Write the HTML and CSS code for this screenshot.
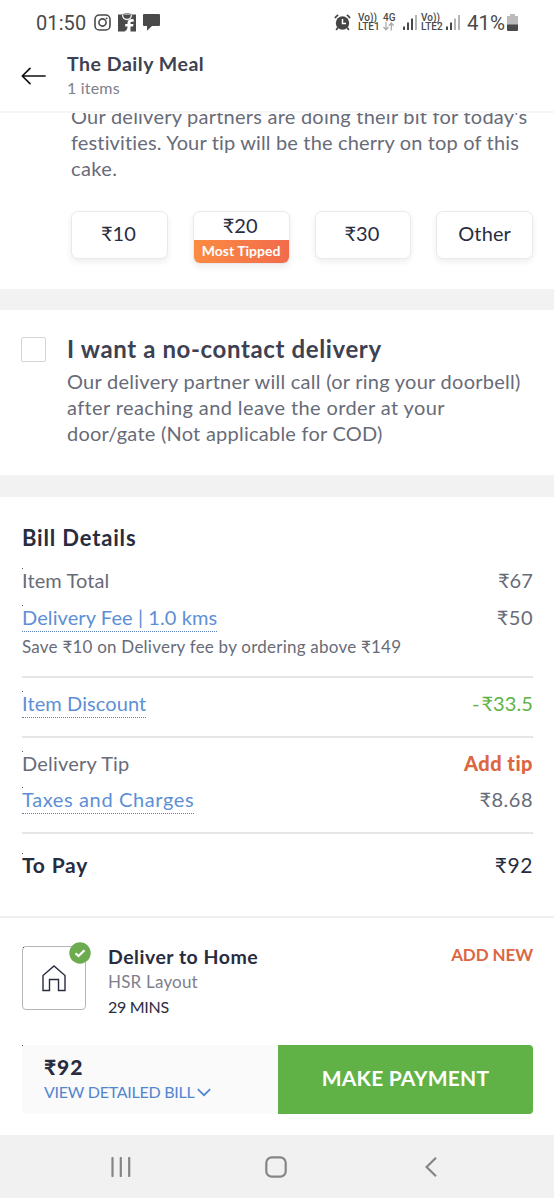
FILE: index.html
```html
<!DOCTYPE html>
<html lang="en">
<head>
<meta charset="utf-8">
<title>The Daily Meal</title>
<link rel="stylesheet" href="styles.css">
</head>
<body>
<div class="status">
  <span class="clock">01:50</span>
  <svg class="ic-insta" width="17" height="17" viewBox="0 0 17 17" fill="none" stroke="#4a4a4a" stroke-width="1.6"><rect x="1" y="1" width="15" height="15" rx="4.3"/><circle cx="8.5" cy="8.5" r="3.6"/><circle cx="12.6" cy="4.4" r=".6" fill="#4a4a4a" stroke-width=".8"/></svg>
  <svg class="ic-bag" width="18" height="19" viewBox="0 0 18 19"><path fill="#4a4a4a" d="M0 1.500h18V18.500H12.500V13.500h2.500l.5-2.500h-3V10q0-1.300 1.300-1.300h1.900V6.200q-5.700-.7-6.200 3.300V11H7.200v2.500h2.300v1q-.3 3-3 4H0z"/><path d="M4.500 1.800q.3 4.700 4.500 4.700t4.500-4.700" fill="none" stroke="#eee" stroke-width="1.300"/><path d="M4.500 1.500q4.500-2.500 9 0" fill="none" stroke="#888" stroke-width="1"/></svg>
  <svg class="ic-chat" width="17" height="17" viewBox="0 0 17 17"><path fill="#4a4a4a" d="M1 0h15q1 0 1 1v10q0 1-1 1H9l-5 4.800V12H1q-1 0-1-1V1q0-1 1-1z"/></svg>
  <span class="grow"></span>
  <svg class="ic-alarm" width="17" height="17" viewBox="0 0 17 17"><circle cx="8.500" cy="9" r="6.700" fill="#454545"/><path d="M8.500 5v4.500h3.500" fill="none" stroke="#fff" stroke-width="1.500"/><path d="M1 4.200Q2 2 4.200 1M16 4.200Q15 2 12.800 1M3.800 13.500l-1.600 2.500M13.200 13.500l1.600 2.500" fill="none" stroke="#454545" stroke-width="1.700"/></svg>
  <span class="net lte1">Vo))<br>LTE1</span>
  <span class="net g4">4G<svg width="11" height="9" viewBox="0 0 11 9" fill="none" stroke="#aaa" stroke-width="1.300"><path d="M3 0v7.500M.5 5l2.500 2.700L5.500 5M8.300 8.500V1M5.800 3.700L8.300 1l2.500 2.700"/></svg></span>
  <svg class="sig" width="14" height="15" viewBox="0 0 14 15"><path fill="#4a4a4a" d="M0 11.500h2V15H0zM4 7.500h2V15H4zM8 3.500h2V15H8z"/><path fill="#b5b5b5" d="M12 0h2v15h-2z"/></svg>
  <span class="net lte2">Vo))<br>LTE2</span>
  <svg class="sig" width="14" height="15" viewBox="0 0 14 15"><path fill="#4a4a4a" d="M0 11.500h2V15H0zM4 7.500h2V15H4z"/><path fill="#b5b5b5" d="M8 3.500h2V15H8zM12 0h2v15h-2z"/></svg>
  <span class="pct">41%</span>
  <svg class="ic-bat" width="11" height="17" viewBox="0 0 11 17"><path fill="#bbb" d="M3 0h5v2h3v9H0V2h3z"/><path fill="#4a4a4a" d="M0 10.500h11V16q0 1-1 1H1q-1 0-1-1z"/></svg>
</div>
<header class="header">
  <svg class="back" width="26" height="18" viewBox="0 0 26 18" fill="none" stroke="#111" stroke-width="1.700" stroke-linecap="round" stroke-linejoin="round"><path d="M24 9H1.500M9 1.300L1.300 9L9 16.700"/></svg>
  <div>
    <div class="h-title"><span>The Daily Meal</span></div>
    <div class="h-sub"><span>1 items</span></div>
  </div>
</header>
<section class="tips">
  <p class="copy tip-copy"><span class="l1">Our delivery partners are doing their bit for today's</span><br><span class="l2">festivities. Your tip will be the cherry on top of this</span><br><span class="l3">cake.</span></p>
  <div class="tip-row">
    <div class="tip">₹10</div>
    <div class="tip popular"><div class="amt">₹20</div><div class="tag">Most Tipped</div></div>
    <div class="tip">₹30</div>
    <div class="tip other">Other</div>
  </div>
</section>
<section class="contact">
  <div class="box"></div>
  <div>
    <h2 class="c-title"><span>I want a no-contact delivery</span></h2>
    <p class="copy c-copy"><span class="l1">Our delivery partner will call (or ring your doorbell)</span><br><span class="l2">after reaching and leave the order at your</span><br><span class="l3">door/gate (Not applicable for COD)</span></p>
  </div>
</section>
<section class="bill">
  <h2 class="b-title"><span>Bill Details</span></h2>
  <div class="row r-total dot"><span>Item Total</span><span class="val">₹67</span></div>
  <div class="row r-fee dot"><span class="link">Delivery Fee | 1.0 kms</span><span class="val">₹50</span></div>
  <div class="save"><span>Save ₹10 on Delivery fee by ordering above ₹149</span></div>
  <div class="row r-disc dot"><span class="link">Item Discount</span><span class="val green">-<i></i>₹33.5</span></div>
  <div class="row r-tip dot"><span>Delivery Tip</span><span class="add">Add tip</span></div>
  <div class="row r-tax dot"><span class="link">Taxes and Charges</span><span class="val">₹8.68</span></div>
  <div class="row r-pay dot"><span class="pay-l">To Pay</span><span class="pay-v">₹92</span></div>
</section>
<section class="address">
  <div class="home dot">
    <svg width="24" height="27" viewBox="0 0 24 27" fill="none" stroke="#282c3f" stroke-width="1.400"><path d="M1 25.500V10.500L12 1l11 9.500v15h-6.500V14.500h-9v11z"/></svg>
    <svg class="check" width="22" height="22" viewBox="0 0 22 22"><circle cx="11" cy="11" r="10.700" fill="#6dab50"/><path d="M6.500 11.300l3 2.800 6-5.800" fill="none" stroke="#fff" stroke-width="2.200"/></svg>
  </div>
  <div class="a-text">
    <div class="a-title"><span>Deliver to Home</span></div>
    <div class="a-sub"><span>HSR Layout</span></div>
    <div class="a-eta"><span>29 MINS</span></div>
  </div>
  <div class="a-new"><span>ADD NEW</span></div>
</section>
<section class="paybar dot">
  <div class="p-left">
    <div class="p-amt"><span>₹92</span></div>
    <div class="p-view"><span>VIEW DETAILED BILL</span><svg width="14" height="9" viewBox="0 0 14 9" fill="none" stroke="#5285d0" stroke-width="1.700"><path d="M.8 1.200L7 7.200l6.200-6"/></svg></div>
  </div>
  <div class="p-btn"><span>MAKE PAYMENT</span></div>
</section>
<nav class="nav">
  <svg width="20" height="20" viewBox="0 0 20 20" stroke="#858585" stroke-width="2.200" stroke-linecap="round"><path d="M1.500 1v18M9.800 1v18M18.200 1v18"/></svg>
  <svg class="n-home" width="22" height="22" viewBox="0 0 22 22" fill="none" stroke="#858585" stroke-width="2.200"><rect x="1.300" y="1.300" width="19.400" height="19.400" rx="5.500"/></svg>
  <svg class="n-back" width="12" height="20" viewBox="0 0 12 20" fill="none" stroke="#858585" stroke-width="2.200"><path d="M11 .8L1.600 10l9.400 9.200"/></svg>
</nav>
</body>
</html>
```
FILE: styles.css
```css
* { box-sizing: border-box; }
body { margin: 0; width: 554px; height: 1200px; overflow: hidden; background: #fff; font-family: Lato, "Noto Sans", sans-serif; color: #282c3f; white-space: nowrap; font-size: 20px; font-variant-ligatures: none; }
h2, p { margin: 0; }
svg { display: block; flex: none; }

.status { height: 44px; display: flex; align-items: center; padding: 0 36px; font-family: Roboto, sans-serif; color: #4a4a4a; }
.clock { width: 58px; font-size: 20px; letter-spacing: .1px; padding-top: 1px; }
.ic-bag { margin-left: 7px; }
.ic-chat { margin-left: 7px; }
.grow { flex: 1; }
.net { font-size: 10px; line-height: 9px; font-weight: 500; margin-left: 7px; width: 22px; }
.g4 { width: 12px; margin-left: 3px; }
.sig { margin-left: 8px; }
.lte2 { margin-left: 4px; }
.lte2 + .sig { margin-left: 3px; }
.pct { font-size: 20.500px; margin-left: 7px; width: 38px; padding-top: 1px; }
.ic-bat { margin-left: 2px; }

.header { height: 69px; display: flex; padding: 7px 0 0 21px; border-bottom: 2px solid #f6f6f7; }
.back { margin: 16px 20px 0 0; }
.h-title { font-size: 19.500px; font-weight: 700; line-height: 25px; color: #3d4152; letter-spacing: .53px; }
.h-sub { font-size: 16px; line-height: 24px; color: #7e808c; letter-spacing: .2px; }

.copy { font-size: 20px; line-height: 26px; color: #686b78; }
.tips { height: 176px; overflow: hidden; padding: 0 21px 0 71px; }
.tip-copy { margin-top: -10px; margin-bottom: 30px; }
.tip-copy .l1 { letter-spacing: .23px; }
.tip-copy .l2 { letter-spacing: .15px; }
.tip-copy .l3 { letter-spacing: .4px; }
.tip-row { display: flex; gap: 25px; align-items: flex-start; }
.tip { width: 97px; height: 48px; border: 1px solid #e9e9eb; border-radius: 7px; box-shadow: 0 3px 6px rgba(40, 44, 63, .08); line-height: 43px; text-align: center; font-size: 20px; background: #fff; padding-right: 2px; }
.popular { height: 53px; overflow: hidden; padding: 0; }
.amt { line-height: 27px; height: 28px; padding-right: 2px; }
.tag { height: 24px; line-height: 21px; font-size: 14px; font-weight: 700; color: #fff; background: linear-gradient(90deg, #fb8b42, #f26b4c); }
.other { letter-spacing: .1px; padding: 0; }

.contact { height: 208px; border: solid #f2f2f2; border-width: 21px 0 22px; padding: 24px 0 0 21px; display: flex; gap: 21px; }
.box { width: 25px; height: 25px; border: 1px solid #d4d5d9; border-radius: 2px; margin-top: 3px; }
.c-title { font-size: 24px; line-height: 29px; height: 30px; color: #3d4152; font-weight: 700; letter-spacing: .62px; }
.c-copy { margin-top: 4px; }
.c-copy .l1 { letter-spacing: .26px; }
.c-copy .l2 { letter-spacing: .39px; }
.c-copy .l3 { letter-spacing: .24px; }

.bill { height: 421px; padding: 26px 21px 0 22px; border-bottom: 2px solid #efeff0; }
.b-title { font-size: 22px; line-height: 30px; font-weight: 700; letter-spacing: .83px; }
.row { display: flex; justify-content: space-between; font-size: 20px; line-height: 24px; height: 26px; color: #686b78; letter-spacing: .1px; }
.dot { position: relative; }
.dot::before { content: ""; position: absolute; left: 0; top: 0; width: 1px; height: 1px; background: #555; }
.link { color: #5d8fd6; border-bottom: 1px dotted #5d7fb8; height: 27px; }
.r-total { margin-top: 15px; }
.r-fee { margin-top: 11px; }
.r-fee .val, .r-tax .val { letter-spacing: .5px; }
.save { font-size: 17px; line-height: 24px; color: #686b78; margin-top: 4px; height: 43px; border-bottom: 2px solid #e6e6e8; letter-spacing: .23px; }
.r-disc { margin-top: 13px; height: 47px; border-bottom: 2px solid #e6e6e8; }
.r-tip { margin-top: 13px; letter-spacing: .2px; }
.r-tax { margin-top: 10px; height: 47px; border-bottom: 2px solid #e6e6e8; }
.r-tax .link { letter-spacing: .62px; }
.r-pay { margin-top: 19px; }
.green { color: #60b246; }
.green i { display: inline-block; width: 2px; }
.add { color: #db6742; font-weight: 900; letter-spacing: .5px; }
.pay-l { color: #282c3f; font-weight: 700; font-size: 21px; letter-spacing: .8px; }
.pay-v { color: #282c3f; font-size: 21px; letter-spacing: .6px; }

.address { height: 127px; display: flex; padding: 28px 21px 0 22px; }
.home { width: 64px; height: 64px; border: 1px solid #b4b5ba; border-radius: 4px; display: flex; align-items: center; justify-content: center; }
.check { position: absolute; right: -6px; top: -5px; }
.a-text { margin: -2px 0 0 22px; flex: 1; }
.a-title { font-size: 19.500px; line-height: 25px; font-weight: 700; letter-spacing: .5px; }
.a-sub { font-size: 17px; line-height: 25px; color: #7e808c; letter-spacing: .2px; }
.a-eta { font-size: 16px; line-height: 25px; letter-spacing: -.3px; }
.a-new { font-size: 17px; line-height: 18px; font-weight: 700; color: #db6742; letter-spacing: -.1px; }

.paybar { margin: 0 21px 21px 22px; height: 69px; display: flex; }
.p-left { width: 256px; background: #fafafa; border-radius: 4px 0 0 4px; padding: 9px 0 0 22px; }
.p-amt { font-size: 21px; line-height: 25px; font-weight: 900; letter-spacing: .9px; }
.p-view { font-size: 16px; line-height: 26px; color: #5285d0; display: flex; align-items: center; gap: 2px; letter-spacing: -.25px; }
.p-btn { flex: 1; background: #60b246; border-radius: 0 4px 4px 0; color: #fff; font-size: 21px; font-weight: 700; line-height: 65px; text-align: center; letter-spacing: .18px; }

.nav { height: 63px; background: #f1f1f1; display: flex; align-items: center; padding-left: 111px; }
.n-home { margin-left: 134px; }
.n-back { margin-left: 138px; }
```
